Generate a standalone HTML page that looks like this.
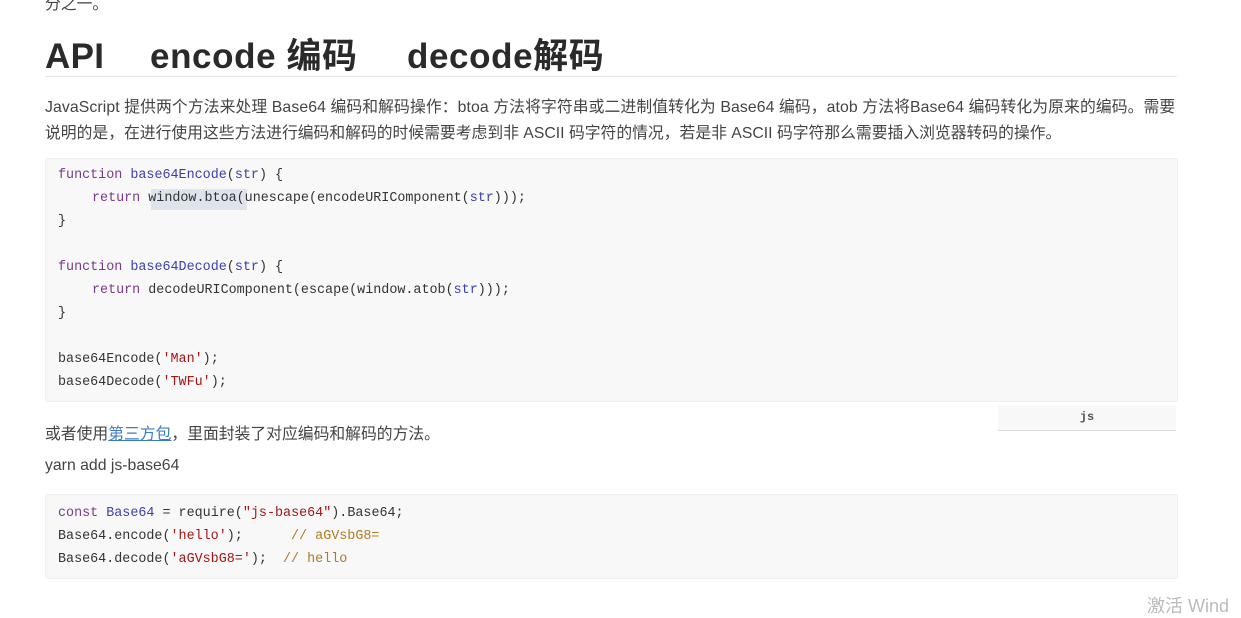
<!DOCTYPE html>
<html><head><meta charset="utf-8"><style>
body{margin:0;width:1241px;height:615px;background:#fff;overflow:hidden;position:relative;font-family:"Liberation Sans","Noto Sans CJK SC",sans-serif;color:#333}
.a{position:absolute;white-space:nowrap}
.p{font-size:15.8px;color:#444}
.h{position:absolute;white-space:nowrap;top:35px;height:44px;line-height:44px;font-size:35px;font-weight:bold;color:#2a2a2a}
.code{position:absolute;background:#f8f8f8;border:1px solid #efefef;border-radius:3px}
.c{position:absolute;font-family:"Liberation Mono","DejaVu Sans Mono",monospace;font-size:13.4px;color:#333;white-space:pre;left:58px}
.k{color:#7a3a8c}.f{color:#3b3fb0}.s{color:#a31515}.m{color:#b07a20}
.r{margin-left:34px}
</style></head><body>
<div class="a p" style="left:45px;top:-9px">分之一。</div>
<div class="h" style="left:45px;letter-spacing:0.3px">API</div>
<div class="h" style="left:150px;letter-spacing:0.6px">encode 编码</div>
<div class="h" style="left:407px;letter-spacing:0.6px">decode解码</div>
<div class="a" style="left:45px;top:76px;width:1132px;height:1px;background:#e6e6e6"></div>
<div class="a p" style="left:45px;top:94px;letter-spacing:0.1px">JavaScript 提供两个方法来处理 Base64 编码和解码操作：btoa 方法将字符串或二进制值转化为 Base64 编码，atob 方法将Base64 编码转化为原来的编码。需要</div>
<div class="a p" style="left:45px;top:120px">说明的是，在进行使用这些方法进行编码和解码的时候需要考虑到非 ASCII 码字符的情况，若是非 ASCII 码字符那么需要插入浏览器转码的操作。</div>
<div class="code" style="left:45px;top:158px;width:1131px;height:242px"></div>
<div class="a" style="left:151px;top:189px;width:96px;height:21px;background:#dde4ec"></div>
<div class="c" style="top:168px"><span class="k">function</span> <span class="f">base64Encode</span>(<span class="f">str</span>) {</div>
<div class="c" style="top:191px"><span class="k r">return</span> window.btoa(unescape(encodeURIComponent(<span class="f">str</span>)));</div>
<div class="c" style="top:214px">}</div>
<div class="c" style="top:260px"><span class="k">function</span> <span class="f">base64Decode</span>(<span class="f">str</span>) {</div>
<div class="c" style="top:283px"><span class="k r">return</span> decodeURIComponent(escape(window.atob(<span class="f">str</span>)));</div>
<div class="c" style="top:306px">}</div>
<div class="c" style="top:352px">base64Encode(<span class="s">'Man'</span>);</div>
<div class="c" style="top:375px">base64Decode(<span class="s">'TWFu'</span>);</div>
<div class="a" style="left:998px;top:405px;width:178px;height:25px;background:#f8f8f8;border-bottom:1px solid #ddd;font-family:'Liberation Mono',monospace;font-size:12px;font-weight:bold;color:#555;text-align:center;line-height:25px">js</div>
<div class="a p" style="left:45px;top:421px">或者使用<span style="color:#3b7dc4;text-decoration:underline">第三方包</span>，里面封装了对应编码和解码的方法。</div>
<div class="a p" style="left:45px;top:457px">yarn add js-base64</div>
<div class="code" style="left:45px;top:494px;width:1131px;height:83px"></div>
<div class="c" style="top:506px"><span class="k">const</span> <span class="f">Base64</span> = require(<span class="s">"js-base64"</span>).Base64;</div>
<div class="c" style="top:529px">Base64.encode(<span class="s">'hello'</span>);      <span class="m">// aGVsbG8=</span></div>
<div class="c" style="top:552px">Base64.decode(<span class="s">'aGVsbG8='</span>);  <span class="m">// hello</span></div>
<div class="a" style="left:1147px;top:592px;font-size:18px;color:#bbb">激活 Wind</div>
</body></html>
